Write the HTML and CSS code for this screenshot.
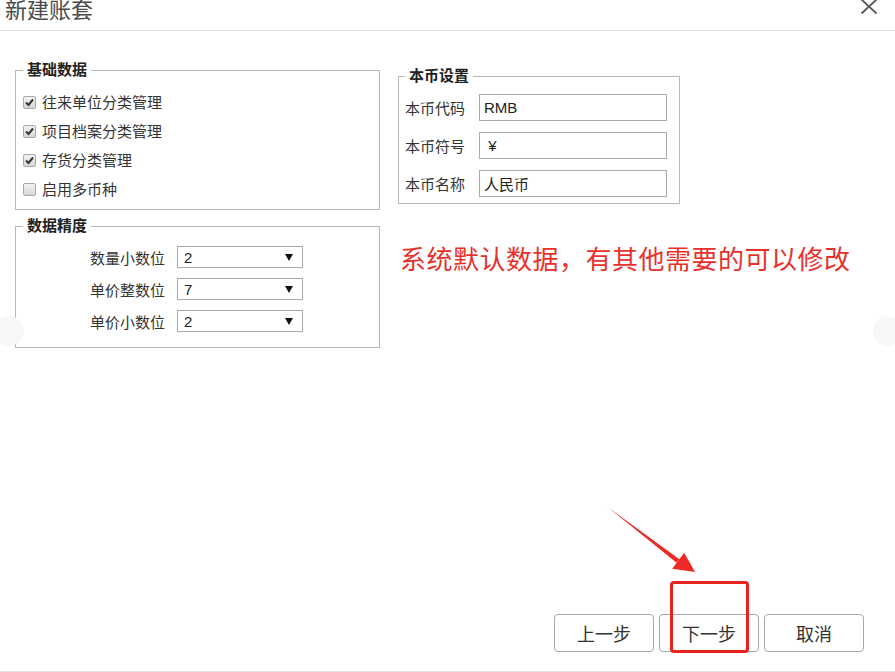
FILE: index.html
```html
<!DOCTYPE html>
<html lang="zh-CN">
<head>
<meta charset="utf-8">
<title>新建账套</title>
<link rel="stylesheet" href="styles.css">
</head>
<body>
<div class="dialog">
  <header class="head">
    <h1 class="title">新建账套</h1>
    <svg class="close" width="18" height="16" viewBox="0 0 18 16"><path d="M1.5 0.5 L16.5 14.5 M16.5 0.5 L1.5 14.5" stroke="#5a5a5a" stroke-width="1.8" fill="none"/></svg>
  </header>

  <main class="body">
    <div class="col-left">
      <fieldset class="group basic">
        <legend>基础数据</legend>
        <label class="check"><span class="box"><svg width="11" height="11" viewBox="0 0 11 11"><path d="M2 5.5 L4.5 8 L9 2.5" stroke="#333" stroke-width="2" fill="none"/></svg></span>往来单位分类管理</label>
        <label class="check"><span class="box"><svg width="11" height="11" viewBox="0 0 11 11"><path d="M2 5.5 L4.5 8 L9 2.5" stroke="#333" stroke-width="2" fill="none"/></svg></span>项目档案分类管理</label>
        <label class="check"><span class="box"><svg width="11" height="11" viewBox="0 0 11 11"><path d="M2 5.5 L4.5 8 L9 2.5" stroke="#333" stroke-width="2" fill="none"/></svg></span>存货分类管理</label>
        <label class="check"><span class="box"></span>启用多币种</label>
      </fieldset>

      <fieldset class="group precision">
        <legend>数据精度</legend>
        <div class="prow"><span class="plabel">数量小数位</span><div class="select"><span>2</span><span class="caret"></span></div></div>
        <div class="prow"><span class="plabel">单价整数位</span><div class="select"><span>7</span><span class="caret"></span></div></div>
        <div class="prow"><span class="plabel">单价小数位</span><div class="select"><span>2</span><span class="caret"></span></div></div>
      </fieldset>
    </div>

    <div class="col-right">
      <fieldset class="group currency">
        <legend>本币设置</legend>
        <div class="crow"><span class="clabel">本币代码</span><div class="input">RMB</div></div>
        <div class="crow"><span class="clabel">本币符号</span><div class="input">&nbsp;¥</div></div>
        <div class="crow"><span class="clabel">本币名称</span><div class="input">人民币</div></div>
      </fieldset>
      <p class="note">系统默认数据，有其他需要的可以修改</p>
    </div>
  </main>

  <footer class="foot">
    <button class="btn">上一步</button>
    <button class="btn">下一步</button>
    <button class="btn">取消</button>
  </footer>

  <div class="nav nav-left"></div>
  <div class="nav nav-right"></div>
  <div class="highlight"></div>
  <svg class="arrow" width="895" height="672" viewBox="0 0 895 672">
    <polygon points="604.8,504.7 605.2,505.3 679.4,559.2 676.6,562.8" fill="#ee2a24"/>
    <polygon points="695,572 684.2,552.8 672.2,568.8" fill="#ee2a24"/>
  </svg>
</div>
</body>
</html>
```

FILE: styles.css
```css
* { box-sizing: border-box; }

html, body {
  margin: 0;
  padding: 0;
  background: #fff;
}

body {
  font-family: "Liberation Sans", "Noto Sans CJK SC", sans-serif;
  color: #333;
  font-size: 15px;
}

.dialog {
  position: relative;
  width: 895px;
  height: 672px;
  display: flex;
  flex-direction: column;
  border-bottom: 1px solid #e2e2e2;
  overflow: hidden;
}

.head {
  height: 31px;
  flex: none;
  display: flex;
  justify-content: space-between;
  align-items: flex-start;
  border-bottom: 1px solid #e3e3e3;
}

.title {
  margin: 0 0 0 5px;
  font-size: 22px;
  line-height: 22px;
  font-weight: normal;
  color: #4a4a4a;
}

.close {
  margin: -1px 17px 0 0;
}

.body {
  flex: 1;
  display: flex;
  gap: 18px;
  padding: 30px 0 0 15px;
}

.col-left {
  width: 365px;
  display: flex;
  flex-direction: column;
  gap: 7px;
}

.col-right {
  width: 282px;
  padding-top: 6px;
}

.group {
  margin: 0;
  border: 1px solid #b7b7b7;
  min-width: 0;
}

.group legend {
  font-size: 15px;
  line-height: 18px;
  font-weight: bold;
  color: #222;
  padding: 0 4px;
}

.basic {
  padding: 9px 7px 5px 7px;
}

.check {
  height: 29px;
  display: flex;
  align-items: center;
  line-height: 18px;
  color: #333;
}

.box {
  width: 13px;
  height: 13px;
  margin-right: 6px;
  border: 1px solid #a9a9a9;
  border-radius: 2px;
  background: linear-gradient(#f3f3f3, #d6d6d6);
  display: flex;
  align-items: center;
  justify-content: center;
}

.precision {
  padding: 6px 7px 10px 7px;
}

.prow {
  height: 32px;
  display: flex;
  align-items: center;
}

.plabel {
  width: 142px;
  text-align: right;
  margin-right: 12px;
  color: #333;
}

.select {
  width: 126px;
  height: 22px;
  border: 1px solid #ababab;
  background: #fff;
  display: flex;
  align-items: center;
  justify-content: space-between;
  padding: 0 9px 0 6px;
  color: #222;
  font-size: 15px;
}

.caret {
  width: 0;
  height: 0;
  border-left: 4px solid transparent;
  border-right: 4px solid transparent;
  border-top: 7px solid #111;
}

.currency {
  padding: 9px 11px 6px 6px;
  display: flex;
  flex-direction: column;
  gap: 11px;
}

.crow {
  height: 27px;
  display: flex;
  align-items: center;
}

.clabel {
  width: 74px;
  color: #333;
}

.input {
  width: 188px;
  height: 27px;
  border: 1px solid #ababab;
  display: flex;
  align-items: center;
  padding-left: 4px;
  color: #222;
  font-size: 15px;
}

.note {
  margin: 39px 0 0 2px;
  font-size: 26px;
  line-height: 30px;
  letter-spacing: 0.5px;
  color: #e8312b;
  white-space: nowrap;
  font-family: "Noto Sans CJK SC", sans-serif;
}

.foot {
  flex: none;
  display: flex;
  justify-content: flex-end;
  gap: 5px;
  padding: 0 31px 19px 0;
}

.btn {
  width: 100px;
  height: 38px;
  border: 1px solid #a9a9a9;
  border-radius: 4px;
  background: #fff;
  font-family: "Noto Sans CJK SC", sans-serif;
  font-size: 18px;
  color: #333;
  padding: 0;
}

.nav {
  position: absolute;
  top: 316px;
  width: 30px;
  height: 30px;
  border-radius: 50%;
  background: #f7f7f7;
}

.nav-left { left: -6px; }
.nav-right { right: -8px; }

.highlight {
  position: absolute;
  left: 670px;
  top: 581px;
  width: 79px;
  height: 72px;
  border: 3px solid #e8231f;
  border-radius: 4px;
}

.arrow {
  position: absolute;
  left: 0;
  top: 0;
  pointer-events: none;
}
```
